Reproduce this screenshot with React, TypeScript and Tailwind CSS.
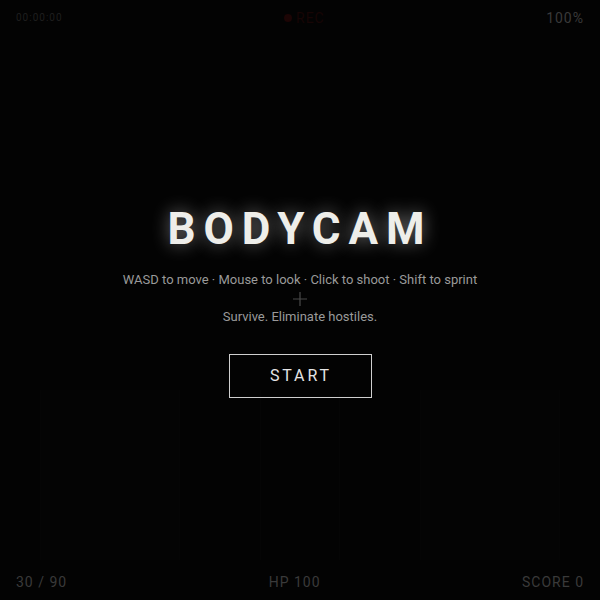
export default function App(): JSX.Element {
  return (
    <div className="relative h-[600px] w-[600px] overflow-hidden bg-[#030303] font-['Roboto',sans-serif]">
      {/* faint scene */}
      <div className="absolute inset-x-[40px] top-[390px] bottom-[40px] flex justify-between opacity-50">
        <div className="w-[140px] border-x border-[#080808] bg-[#050505]" />
        <div className="w-[80px] border-x border-[#080808] bg-[#040404]" />
        <div className="w-[140px] border-x border-[#080808] bg-[#050505]" />
      </div>

      {/* crosshair */}
      <svg className="absolute left-[292px] top-[291px]" width="16" height="16" viewBox="0 0 16 16">
        <path d="M8 1v14M1 8h14" stroke="#4a4a4a" strokeWidth="1.2" />
      </svg>

      <div className="relative flex h-full flex-col">
        <div className="flex items-center justify-between px-4 pt-2 text-sm leading-5 tracking-[1px] text-[#3a3a3a]">
          <span className="text-[10px] text-[#1f1f1f]">00:00:00</span>
          <span className="flex items-center gap-1 text-[#170505]">
            <span className="h-2 w-2 rounded-full bg-[#1c0505]" />
            REC
          </span>
          <span>100%</span>
        </div>

        <div className="flex flex-1 flex-col items-center justify-center pt-[4px]">
          <h1 className="text-[44px] font-bold leading-none tracking-[0.18em] text-[#eeeeea] [text-shadow:0_0_18px_rgba(255,255,255,0.45)]">
            BODYCAM
          </h1>
          <p className="mt-[19px] text-[13px] leading-5 text-[#9a9a9a]">
            WASD to move · Mouse to look · Click to shoot · Shift to sprint
          </p>
          <p className="mt-[17px] text-[13px] leading-5 text-[#9a9a9a]">Survive. Eliminate hostiles.</p>
          <button className="mt-[27px] flex h-[44px] w-[143px] items-center justify-center border border-[#cfcfcf] pl-[0.12em] text-base tracking-[0.18em] text-[#e5e5e5]">
            START
          </button>
        </div>

        <div className="flex items-center justify-between px-4 pb-2 text-sm leading-5 tracking-[1px] text-[#3a3a3a]">
          <span>30 / 90</span>
          <span>HP 100</span>
          <span>SCORE 0</span>
        </div>
      </div>
    </div>
  )
}
